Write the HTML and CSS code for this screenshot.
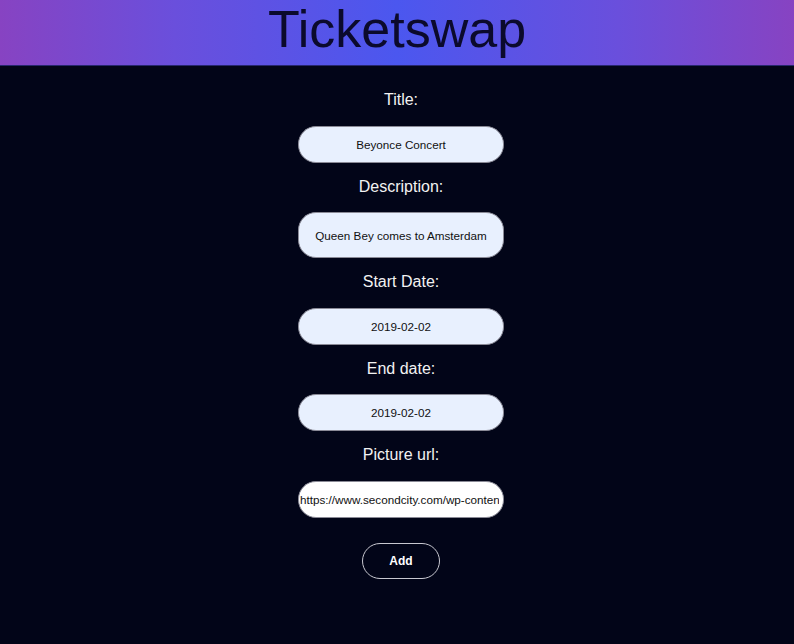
FILE: index.html
```html
<!DOCTYPE html>
<html lang="en">
<head>
<meta charset="utf-8">
<title>Ticketswap</title>
<link rel="stylesheet" href="styles.css">
</head>
<body>
<header class="top">
  <h1 class="brand">Ticketswap</h1>
</header>
<main class="page">
  <form class="event-form">
    <label class="field-label" for="title">Title:</label>
    <input class="field" id="title" type="text" value="Beyonce Concert">
    <label class="field-label" for="desc">Description:</label>
    <input class="field field-tall" id="desc" type="text" value="Queen Bey comes to Amsterdam">
    <label class="field-label" for="start">Start Date:</label>
    <input class="field" id="start" type="text" value="2019-02-02">
    <label class="field-label" for="end">End date:</label>
    <input class="field" id="end" type="text" value="2019-02-02">
    <label class="field-label" for="pic">Picture url:</label>
    <input class="field field-plain" id="pic" type="text" value="https://www.secondcity.com/wp-content/uploads/beyonce.jpg">
    <button class="add-btn" type="button">Add</button>
  </form>
</main>
</body>
</html>
```

FILE: styles.css
```css
html, body {
  margin: 0;
  padding: 0;
}
body {
  background: #020518;
  font-family: "Liberation Sans", Arial, sans-serif;
  color: #ffffff;
  min-height: 644px;
}
.top {
  height: 66px;
  background: linear-gradient(to right, #8743c2 0%, #6a4fdc 22%, #4b57ef 50%, #6a4fdc 78%, #8743c2 100%);
  border-bottom: 1px solid #27276e;
  box-sizing: border-box;
  display: flex;
  justify-content: center;
  align-items: flex-start;
}
.brand {
  margin: 0;
  font-family: "Liberation Sans", Arial, sans-serif;
  font-weight: normal;
  font-size: 52px;
  line-height: 58px;
  color: #0b0a2c;
}
.page {
  display: flex;
  justify-content: center;
  padding-top: 25px;
  padding-left: 8px;
}
.event-form {
  display: flex;
  flex-direction: column;
  align-items: center;
  width: 206px;
}
.field-label {
  font-size: 16px;
  line-height: 18px;
  color: #f2f2f2;
  margin-bottom: 16.5px;
}
.field {
  box-sizing: border-box;
  width: 206px;
  height: 37px;
  margin: 0 0 15px 0;
  padding: 0 4px;
  border: 1px solid #8a8a96;
  border-radius: 18px;
  background: #e8f0fe;
  color: #111111;
  font-family: "Liberation Sans", Arial, sans-serif;
  font-size: 11.7px;
  text-align: center;
  outline: none;
}
.field-tall {
  height: 46px;
}
.field-plain {
  background: #ffffff;
  text-align: left;
  padding-left: 1px;
}
.add-btn {
  box-sizing: border-box;
  width: 78px;
  height: 36px;
  margin-top: 10px;
  border: 1px solid #c8c8d0;
  border-radius: 18px;
  background: transparent;
  color: #ffffff;
  font-family: "Liberation Sans", Arial, sans-serif;
  font-weight: bold;
  font-size: 12px;
  cursor: pointer;
}
```
